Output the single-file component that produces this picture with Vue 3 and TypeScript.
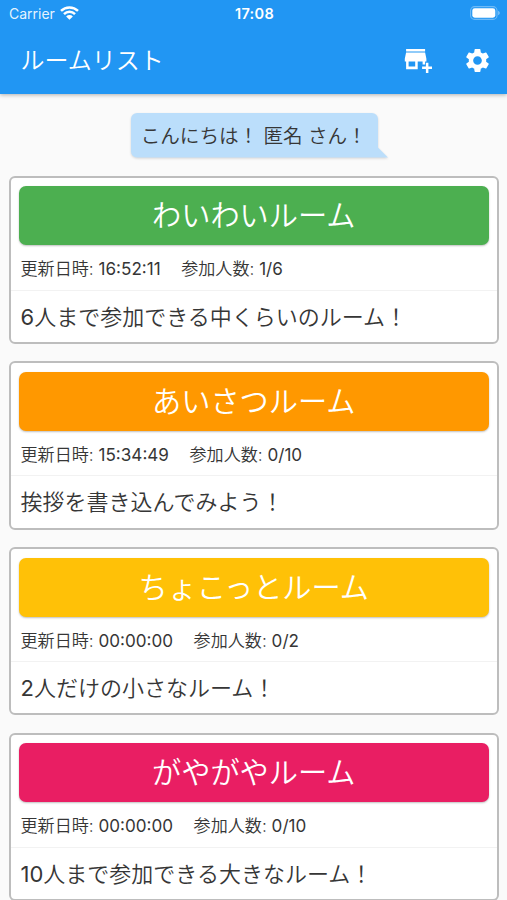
<script setup lang="ts">
interface Room {
  name: string
  color: string
  updated: string
  members: string
  limit?: number
  description: string
}

const userName = '匿名'

const rooms: Room[] = [
  { name: 'わいわいルーム', color: '#4caf50', updated: '16:52:11', members: '1/6', limit: 6, description: '人まで参加できる中くらいのルーム！' },
  { name: 'あいさつルーム', color: '#ff9800', updated: '15:34:49', members: '0/10', description: '挨拶を書き込んでみよう！' },
  { name: 'ちょこっとルーム', color: '#ffc107', updated: '00:00:00', members: '0/2', limit: 2, description: '人だけの小さなルーム！' },
  { name: 'がやがやルーム', color: '#e91e63', updated: '00:00:00', members: '0/10', limit: 10, description: '人まで参加できる大きなルーム！' },
]
</script>

<template>
  <div class="screen">
    <header class="app-bar">
      <div class="status">
        <div class="carrier">
          <span>Carrier</span>
          <svg class="wifi" viewBox="0 0 19 14" aria-hidden="true">
            <path d="M1 4.9a12.2 12.2 0 0 1 17 0M4 8.1a7.9 7.9 0 0 1 11 0" fill="none" stroke="#fff" stroke-width="2.5" />
            <path d="M9.5 13.8 6.1 10.4a4.9 4.9 0 0 1 6.8 0z" fill="#fff" />
          </svg>
        </div>
        <span class="clock">17:08</span>
        <svg class="battery" viewBox="0 0 30 14" aria-hidden="true">
          <rect x=".6" y=".6" width="26.4" height="12.8" rx="4" fill="none" stroke="#fff" stroke-opacity=".35" stroke-width="1.1" />
          <rect x="2.3" y="2.3" width="23" height="9.4" rx="2.4" fill="#fff" />
          <path d="M28.2 4.8c2 .9 2 3.5 0 4.4z" fill="#fff" fill-opacity=".45" />
        </svg>
      </div>
      <div class="toolbar">
        <h1>ルームリスト</h1>
        <button class="action" aria-label="add room">
          <svg viewBox="0 0 28 26" aria-hidden="true">
            <path d="M2.1 2.1h19v2.5H2.1zM2.1 5.6h19l1.3 6.2v2.6h-1.3v3.1h-2.5v-3.1h-4.9v7.9H2.1v-7.9H.8v-2.6zM4.6 14.4v5h6.6v-5z" fill="#fff" fill-rule="evenodd" />
            <path d="M21.9 15.8h2.5v3.7h3.6V22h-3.6v3.9h-2.5V22h-3.8v-2.5h3.8z" fill="#fff" />
          </svg>
        </button>
        <button class="action gear" aria-label="settings">
          <svg viewBox="0 0 24 24" aria-hidden="true">
            <path d="M19.14 12.94c.04-.3.06-.61.06-.94 0-.32-.02-.64-.07-.94l2.03-1.58a.49.49 0 0 0 .12-.61l-1.92-3.32a.488.488 0 0 0-.59-.22l-2.39.96c-.5-.38-1.03-.7-1.62-.94l-.36-2.54a.484.484 0 0 0-.48-.41h-3.84c-.24 0-.43.17-.47.41l-.36 2.54c-.59.24-1.13.57-1.62.94l-2.39-.96c-.22-.08-.47 0-.59.22L2.74 8.87c-.12.21-.08.47.12.61l2.03 1.58c-.05.3-.09.63-.09.94s.02.64.07.94l-2.03 1.58a.49.49 0 0 0-.12.61l1.92 3.32c.12.22.37.29.59.22l2.39-.96c.5.38 1.03.7 1.62.94l.36 2.54c.05.24.24.41.48.41h3.84c.24 0 .44-.17.47-.41l.36-2.54c.59-.24 1.13-.56 1.62-.94l2.39.96c.22.08.47 0 .59-.22l1.92-3.32c.12-.22.07-.47-.12-.61l-2.01-1.58zM12 15.6c-1.98 0-3.6-1.62-3.6-3.6s1.62-3.6 3.6-3.6 3.6 1.62 3.6 3.6-1.62 3.6-3.6 3.6z" fill="#fff" />
          </svg>
        </button>
      </div>
    </header>

    <main>
      <div class="greeting">
        <svg class="bubble" viewBox="0 0 258 45" aria-hidden="true">
          <path d="M6 0H241a6 6 0 0 1 6 6V34.5L257 44.5H6a6 6 0 0 1-6-6V6a6 6 0 0 1 6-6z" fill="#bbdefb" />
        </svg>
        <span class="hello">こんにちは！ {{ userName }} さん！</span>
      </div>

      <section class="rooms">
        <article v-for="room in rooms" :key="room.name" class="card">
          <h2 class="banner" :style="{ backgroundColor: room.color }">{{ room.name }}</h2>
          <div class="info">
            <span>更新日時: <span class="value">{{ room.updated }}</span></span>
            <span>参加人数: <span class="value">{{ room.members }}</span></span>
          </div>
          <p class="description"><span v-if="room.limit" class="value">{{ room.limit }}</span>{{ room.description }}</p>
        </article>
      </section>
    </main>
  </div>
</template>

<style>
body {
  margin: 0;
  overflow: hidden;
}
</style>

<style scoped>
.screen {
  box-sizing: border-box;
  height: 900px;
  overflow: hidden;
  display: flex;
  flex-direction: column;
  background: #fafafa;
  color: #363636;
  font-family: Inter, "Noto Sans CJK JP", sans-serif;
  font-weight: 350;
}

.app-bar {
  flex: none;
  height: 94px;
  background: #2196f3;
  color: #fff;
  box-shadow: 0 1px 4px rgba(0, 0, 0, 0.3);
}

.status {
  display: grid;
  grid-template-columns: 1fr auto 1fr;
  align-items: center;
  height: 27px;
  padding: 0 7px 0 9px;
  font-size: 14px;
  font-weight: 400;
}

.carrier {
  display: flex;
  align-items: center;
  gap: 5.5px;
  color: rgba(255, 255, 255, 0.9);
}

.wifi {
  width: 19px;
  height: 14px;
  margin-top: -2px;
}

.clock {
  font-weight: 600;
  font-size: 14.5px;
  letter-spacing: 0.3px;
}

.battery {
  justify-self: end;
  width: 30px;
  height: 14px;
  margin-top: -1px;
}

.toolbar {
  display: flex;
  align-items: center;
  height: 66px;
  padding: 0 15px 0 20.5px;
}

h1 {
  flex: 1;
  margin: 0;
  padding-top: 1px;
  font-size: 24px;
  line-height: 36px;
  font-weight: 350;
}

.action {
  display: flex;
  padding: 0;
  border: 0;
  background: none;
}

.action svg {
  width: 28px;
  height: 26px;
}

.gear {
  margin-left: 31px;
}

.gear svg {
  width: 29px;
  height: 29px;
}

main {
  display: flex;
  flex-direction: column;
  padding: 19px 8.5px 0 9px;
}

.greeting {
  align-self: center;
  display: grid;
  width: 258px;
  height: 45px;
  margin-left: 12px;
}

.greeting > * {
  grid-area: 1 / 1;
}

.bubble {
  width: 258px;
  height: 45px;
  filter: drop-shadow(0 1px 1px rgba(0, 0, 0, 0.15));
}

.hello {
  z-index: 1;
  padding-left: 10px;
  font-size: 19.6px;
  line-height: 46px;
  letter-spacing: -0.05px;
  white-space: pre;
}

.rooms {
  display: flex;
  flex-direction: column;
  gap: 17.2px;
  padding-top: 17.5px;
}

.card {
  box-sizing: border-box;
  height: 168.5px;
  border: 2px solid #bdbdbd;
  border-radius: 6px;
  background: #fff;
}

.banner {
  height: 59px;
  margin: 8.7px 8px 0;
  border-radius: 7px;
  box-shadow: 0 1px 2px rgba(0, 0, 0, 0.25);
  color: #fff;
  font-size: 29.2px;
  line-height: 60px;
  font-weight: 350;
  text-align: center;
}

.info {
  display: flex;
  gap: 20.5px;
  height: 44.5px;
  padding-left: 9.5px;
  border-bottom: 1px solid #f2f2f2;
  font-size: 17.1px;
  line-height: 47px;
  white-space: pre;
}

.value {
  font-weight: 400;
}

.description {
  margin: 0;
  padding-left: 9.5px;
  font-size: 22px;
  line-height: 52px;
  white-space: nowrap;
}
</style>
